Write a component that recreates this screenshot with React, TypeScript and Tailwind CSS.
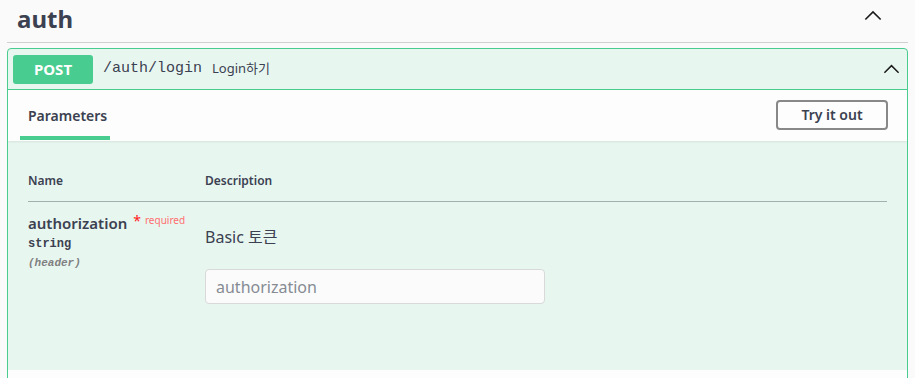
import React from "react";

const sans = "font-['Noto_Sans','Open_Sans','Noto_Sans_CJK_KR',sans-serif]";
const mono = "font-['Liberation_Mono','DejaVu_Sans_Mono',monospace]";

function Chevron({ className }: { className?: string }) {
  return (
    <svg viewBox="0 0 20 12" className={className} fill="none" stroke="#1a1a1a" strokeWidth="1.8">
      <path d="M1.5 10.5 L10 2 L18.5 10.5" />
    </svg>
  );
}

export default function App() {
  return (
    <div className={`w-[915px] h-[378px] overflow-hidden bg-[#fafafa] text-[#3b4151] ${sans}`}>
      <div className="px-[7px]">
        {/* tag header */}
        <div className="flex items-center justify-between h-[43px] border-b border-[#d0d0d0] pl-[10px] pr-[26px]">
          <h3 className="text-[24px] font-bold leading-none -mt-[4px]">auth</h3>
          <Chevron className="w-[18px] h-[11px] -mt-[12px]" />
        </div>

        {/* operation block */}
        <div className="mt-[5px] border border-[#49cc90] rounded-[4px] bg-[#e8f6f0] overflow-hidden">
          <div className="flex items-center h-[41px] border-b border-[#49cc90] pl-[5px] pr-[6px]">
            <span className="w-[80px] h-[29px] rounded-[3px] bg-[#49cc90] text-white text-[15px] font-bold flex items-center justify-center">
              POST
            </span>
            <span className={`ml-[10px] text-[15px] ${mono}`}>/auth/login</span>
            <span className="ml-[10px] text-[13px] text-[#3b4151]">Login하기</span>
            <Chevron className="ml-auto w-[17px] h-[10px] mr-[1px]" />
          </div>

          {/* tabs */}
          <div className="flex items-center justify-between h-[51px] bg-[#fcfdfc] pl-[12px] pr-[19px] shadow-[0_1px_2px_rgba(0,0,0,0.08)]">
            <div className="self-stretch flex flex-col justify-end">
              <div className="px-[8px] pb-[10px] text-[14px] font-semibold">Parameters</div>
              <div className="h-[4px] w-[90px] bg-[#49cc90] mb-[1px]" />
            </div>
            <button className="w-[112px] h-[30px] border-2 border-[#888] rounded-[4px] text-[14px] font-semibold text-[#3b4151] -mt-[2px]">
              Try it out
            </button>
          </div>

          {/* parameters */}
          <div className="px-[20px] pt-[31px] h-[229px]">
            <div className="flex text-[12px] font-semibold pb-[11px] border-b border-[#a4b0ad]">
              <div className="w-[177px]">Name</div>
              <div>Description</div>
            </div>
            <div className="flex pt-[10px]">
              <div className="w-[177px]">
                <div className="flex items-start">
                  <span className="text-[15px] font-semibold leading-[22px]">authorization</span>
                  <span className="ml-[6px] text-[#ff2020] text-[14px] leading-[18px]">*</span>
                  <span className="ml-[4px] text-[10px] text-[#ff6f6f] leading-[16px]">required</span>
                </div>
                <div className={`text-[12px] font-bold leading-[20px] ${mono}`}>string</div>
                <div className={`text-[11px] italic font-semibold text-[#808080] leading-[18px] ${mono}`}>(header)</div>
              </div>
              <div className="pt-[14px]">
                <div className="text-[16px] leading-[22px]">Basic 토큰</div>
                <input
                  className="mt-[21px] w-[340px] h-[35px] rounded-[4px] border border-[#d9d9d9] bg-[#fbfbfb] px-[10px] text-[16px] placeholder:text-[#868b94] outline-none"
                  placeholder="authorization"
                />
              </div>
            </div>
          </div>
          <div className="h-[20px] bg-[#fcfdfc]" />
        </div>
      </div>
    </div>
  );
}
